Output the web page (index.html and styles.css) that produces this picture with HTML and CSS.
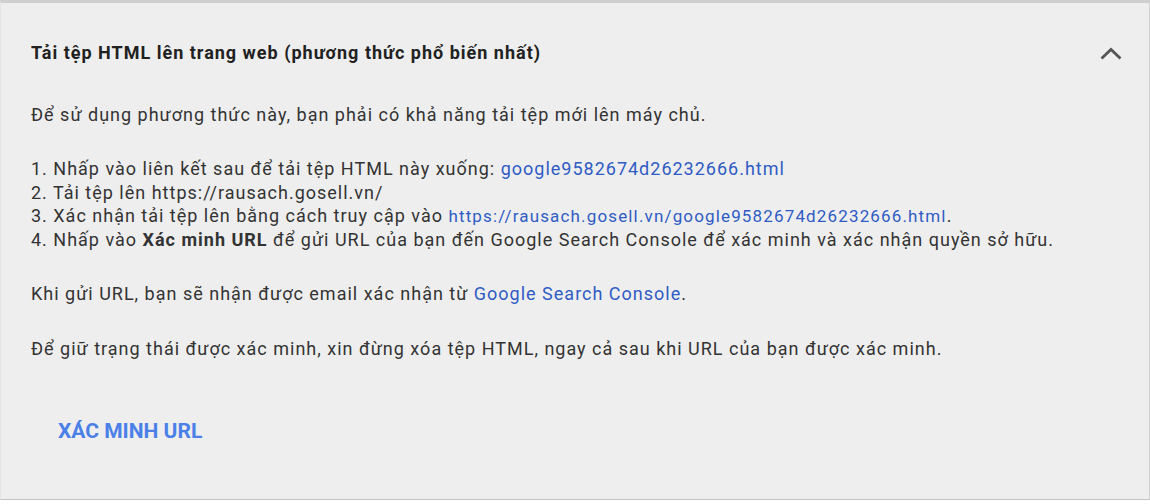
FILE: index.html
```html
<!DOCTYPE html>
<html lang="vi">
<head>
  <meta charset="UTF-8">
  <meta name="viewport" content="width=device-width, initial-scale=1.0">
  <title>Xác minh URL</title>
  <link rel="stylesheet" href="styles.css">
</head>
<body>

  <!-- Panel phương thức xác minh -->
  <div class="panel">
    <div class="panel-header">
      <h5 class="panel-title">Tải tệp HTML lên trang web (phương thức phổ biến nhất)</h5>
      <button class="toggle" aria-label="Thu gọn">
        <svg width="22" height="13" viewBox="0 0 22 13"><path d="M1.5 11.5 L11 2.5 L20.5 11.5" fill="none" stroke="#555" stroke-width="2.8"/></svg>
      </button>
    </div>

    <div class="panel-body">
      <p>Để sử dụng phương thức này, bạn phải có khả năng tải tệp mới lên máy chủ.</p>

      <p>
        1. Nhấp vào liên kết sau để tải tệp HTML này xuống: <a href="#" class="link">google9582674d26232666.html</a><br>
        2. Tải tệp lên https://rausach.gosell.vn/<br>
        3. Xác nhận tải tệp lên bằng cách truy cập vào <a href="#" class="link link-small">https://rausach.gosell.vn/google9582674d26232666.html</a>.<br>
        4. Nhấp vào <b>Xác minh URL</b> để gửi URL của bạn đến Google Search Console để xác minh và xác nhận quyền sở hữu.
      </p>

      <p>Khi gửi URL, bạn sẽ nhận được email xác nhận từ <a href="#" class="link">Google Search Console</a>.</p>

      <p>Để giữ trạng thái được xác minh, xin đừng xóa tệp HTML, ngay cả sau khi URL của bạn được xác minh.</p>
    </div>

    <div class="panel-footer">
      <button class="btn-verify">XÁC MINH URL</button>
    </div>
  </div>

</body>
</html>
```

FILE: styles.css
```css
/* Dasar */
body {
  margin: 0;
  font-family: Roboto, "Noto Sans", Arial, sans-serif;
  color: #333;
  background-color: #fff;
}

/* Panel */
.panel {
  background-color: #eeeeee;
  border-top: 3px solid #cfcfcf;
  border-right: 1px solid #cfcfcf;
  border-bottom: 1px solid #c4c4c4;
  border-left: 1px solid #e4e4e4;
  height: 500px;
  box-sizing: border-box;
}

/* Header */
.panel-header {
  display: flex;
  align-items: center;
  justify-content: space-between;
  padding: 38px 27px 0 30px;
}
.panel-title {
  margin: 0;
  font-size: 18px;
  font-weight: 700;
  letter-spacing: 1px;
  color: #212121;
  line-height: 24px;
}
.toggle {
  border: none;
  background: none;
  padding: 0;
  display: flex;
  cursor: pointer;
}

/* Isi */
.panel-body {
  padding: 38px 30px 0 30px;
  font-size: 18px;
  letter-spacing: 1px;
  line-height: 23.3px;
}
.panel-body p {
  margin: 0 0 31px;
}
.link {
  color: #2f5cc4;
  text-decoration: none;
}
.link-small {
  font-size: 17px;
  letter-spacing: 1.15px;
}

/* Tombol */
.panel-footer {
  padding: 22px 0 0 45px;
}
.btn-verify {
  border: none;
  background: none;
  padding: 6px 12px;
  font-family: Roboto, "Noto Sans", Arial, sans-serif;
  font-size: 21px;
  font-weight: 700;
  color: #4a80e8;
  cursor: pointer;
}
```
